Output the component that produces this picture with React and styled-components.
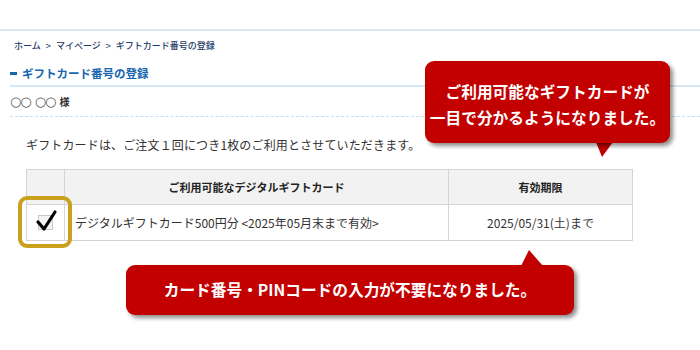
import React from "react";
import styled, { createGlobalStyle } from "styled-components";

const GlobalStyle = createGlobalStyle`
  body {
    margin: 0;
    background: #fff;
    font-family: "Noto Sans CJK JP", "Noto Sans", sans-serif;
  }
`;

const Page = styled.div`
  position: relative;
  width: 700px;
  height: 350px;
  overflow: hidden;
  background: #fff;
`;

const TopBar = styled.div`
  height: 29px;
  border-bottom: 2px solid #d9eaf6;
`;

const Breadcrumb = styled.div`
  padding: 8px 14px 0;
  font-size: 9px;
  line-height: 14px;
  color: #1f3c6a;
  font-weight: 500;
`;

const Sep = styled.span`
  margin: 0 5px;
`;

const Heading = styled.h1`
  display: flex;
  align-items: center;
  gap: 5px;
  margin: 0 0 0 10px;
  padding: 13px 0 5px;
  font-size: 11.5px;
  line-height: 14px;
  font-weight: bold;
  color: #1866ad;
  border-bottom: 2px solid #d6e8f5;
`;

const Dash = styled.span`
  width: 7px;
  height: 3px;
  background: #1866ad;
`;

const NameRow = styled.div`
  display: flex;
  align-items: center;
  gap: 4px;
  margin-left: 10px;
  padding: 8px 0 7px;
  font-size: 10px;
  line-height: 14px;
  color: #333;
  border-bottom: 1px dashed #c8def0;
`;

const Circles = styled.span`
  font-family: "DejaVu Sans", sans-serif;
  font-size: 13px;
  color: #555;
  letter-spacing: -1px;
`;

const Content = styled.div`
  padding: 20px 0 0 26px;
`;

const Intro = styled.p`
  margin: 0 0 16px;
  font-size: 12px;
  line-height: 16px;
  letter-spacing: 0.15px;
  color: #333;
`;

const TableWrap = styled.div`
  position: relative;
  width: 606px;
`;

const Table = styled.table`
  width: 100%;
  border-collapse: collapse;
  table-layout: fixed;
  font-size: 12px;
  color: #333;
`;

const Th = styled.th`
  height: 34px;
  padding: 0;
  background: #f2f2f2;
  border: 1px solid #d4d4d4;
  font-weight: bold;
  font-size: 11px;
  text-align: center;
  color: #222;
`;

const Td = styled.td`
  height: 35px;
  padding: 0 ${(p) => (p.$align === "left" ? "10px" : "0")};
  border: 1px solid #d4d4d4;
  text-align: ${(p) => p.$align || "center"};
  white-space: nowrap;
`;

const Highlight = styled.div`
  position: absolute;
  left: -8px;
  top: 27px;
  width: 46px;
  height: 44px;
  border: 4px solid #c9a11c;
  border-radius: 9px;
`;

const CheckBox = styled.div`
  position: relative;
  width: 13px;
  height: 13px;
  margin: 0 auto;
  border: 1px solid #c8c8c8;
  background: #f3f3f3;

  svg {
    position: absolute;
    left: -4px;
    top: -7px;
  }
`;

const Callout = styled.div`
  position: absolute;
  left: ${(p) => p.$left}px;
  top: ${(p) => p.$top}px;
  width: ${(p) => p.$width}px;
  height: ${(p) => p.$height}px;
  box-sizing: border-box;
  padding-top: ${(p) => p.$pad}px;
  background: #c30000;
  border-radius: 9px;
  box-shadow: 3px 3px 4px rgba(0, 0, 0, 0.45);
  color: #fff;
  font-weight: bold;
  font-size: 15.7px;
  line-height: 26px;
  text-align: center;
  white-space: nowrap;
`;

const Tail = styled.svg`
  position: absolute;
  left: ${(p) => p.$left}px;
  top: ${(p) => p.$top}px;
  overflow: visible;
`;

const App = () => {
  return (
    <Page>
      <GlobalStyle />
      <TopBar />
      <Breadcrumb>
        ホーム<Sep>&gt;</Sep>マイページ<Sep>&gt;</Sep>ギフトカード番号の登録
      </Breadcrumb>
      <Heading>
        <Dash />
        ギフトカード番号の登録
      </Heading>
      <NameRow>
        <Circles>○○</Circles>
        <Circles>○○</Circles>
        <b>様</b>
      </NameRow>
      <Content>
        <Intro>ギフトカードは、ご注文１回につき1枚のご利用とさせていただきます。</Intro>
        <TableWrap>
          <Table>
            <colgroup>
              <col style={{ width: 38 }} />
              <col style={{ width: 384 }} />
              <col style={{ width: 184 }} />
            </colgroup>
            <thead>
              <tr>
                <Th />
                <Th>ご利用可能なデジタルギフトカード</Th>
                <Th>有効期限</Th>
              </tr>
            </thead>
            <tbody>
              <tr>
                <Td>
                  <CheckBox>
                    <svg width="24" height="24" viewBox="0 0 24 24">
                      <path
                        d="M3 13 L9 20 L20 3"
                        fill="none"
                        stroke="#000"
                        strokeWidth="3.2"
                        strokeLinecap="round"
                        strokeLinejoin="round"
                      />
                    </svg>
                  </CheckBox>
                </Td>
                <Td $align="left">デジタルギフトカード500円分 &lt;2025年05月末まで有効&gt;</Td>
                <Td>2025/05/31(土)まで</Td>
              </tr>
            </tbody>
          </Table>
          <Highlight />
        </TableWrap>
      </Content>

      <Tail $left={595} $top={142} width="20" height="16">
        <polygon points="1,0 7,15 18,0" fill="#c30000" />
      </Tail>
      <Callout $left={425} $top={61} $width={245} $height={82} $pad={18}>
        ご利用可能なギフトカードが
        <br />
        一目で分かるようになりました。
      </Callout>

      <Tail $left={519} $top={250} width="26" height="16">
        <polygon points="2,16 10,0 24,16" fill="#c30000" />
      </Tail>
      <Callout $left={126} $top={265} $width={448} $height={50} $pad={12}>
        カード番号・PINコードの入力が不要になりました。
      </Callout>
    </Page>
  );
};

export default App;
